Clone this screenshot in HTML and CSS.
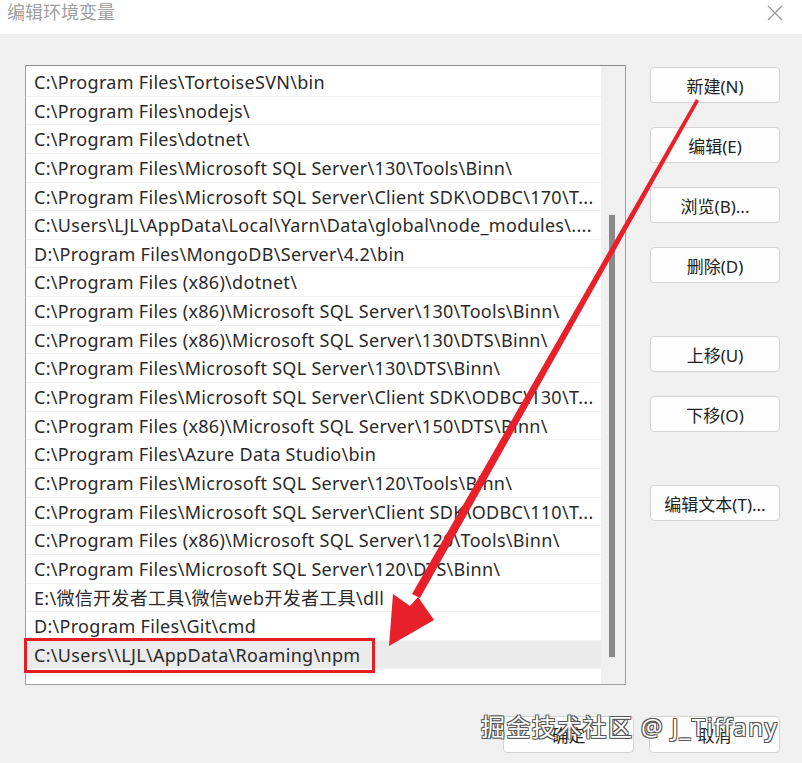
FILE: index.html
```html
<!DOCTYPE html>
<html lang="zh-CN">
<head>
    <meta charset="UTF-8">
    <title>编辑环境变量</title>
    <link rel="stylesheet" href="styles.css">
</head>
<body>
    <div class="window">
        <!-- Barra de título -->
        <div class="titlebar">
            <span class="title">编辑环境变量</span>
            <svg class="close" width="16" height="16" viewBox="0 0 16 16">
                <path d="M1 1 L15 15 M15 1 L1 15" stroke="#9a9a9a" stroke-width="1.3" fill="none"/>
            </svg>
        </div>

        <div class="content">
            <!-- Lista de caminhos -->
            <div class="listbox">
                <ul class="paths">
                    <li>C:\Program Files\TortoiseSVN\bin</li>
                    <li>C:\Program Files\nodejs\</li>
                    <li>C:\Program Files\dotnet\</li>
                    <li>C:\Program Files\Microsoft SQL Server\130\Tools\Binn\</li>
                    <li>C:\Program Files\Microsoft SQL Server\Client SDK\ODBC\170\T...</li>
                    <li>C:\Users\LJL\AppData\Local\Yarn\Data\global\node_modules\....</li>
                    <li>D:\Program Files\MongoDB\Server\4.2\bin</li>
                    <li>C:\Program Files (x86)\dotnet\</li>
                    <li>C:\Program Files (x86)\Microsoft SQL Server\130\Tools\Binn\</li>
                    <li>C:\Program Files (x86)\Microsoft SQL Server\130\DTS\Binn\</li>
                    <li>C:\Program Files\Microsoft SQL Server\130\DTS\Binn\</li>
                    <li>C:\Program Files\Microsoft SQL Server\Client SDK\ODBC\130\T...</li>
                    <li>C:\Program Files (x86)\Microsoft SQL Server\150\DTS\Binn\</li>
                    <li>C:\Program Files\Azure Data Studio\bin</li>
                    <li>C:\Program Files\Microsoft SQL Server\120\Tools\Binn\</li>
                    <li>C:\Program Files\Microsoft SQL Server\Client SDK\ODBC\110\T...</li>
                    <li>C:\Program Files (x86)\Microsoft SQL Server\120\Tools\Binn\</li>
                    <li>C:\Program Files\Microsoft SQL Server\120\DTS\Binn\</li>
                    <li>E:\微信开发者工具\微信web开发者工具\dll</li>
                    <li>D:\Program Files\Git\cmd</li>
                    <li class="selected">C:\Users\\LJL\AppData\Roaming\npm</li>
                </ul>
                <div class="scrollbar"><div class="thumb"></div></div>
            </div>

            <!-- Botões laterais -->
            <div class="side-buttons">
                <button class="btn">新建(N)</button>
                <button class="btn">编辑(E)</button>
                <button class="btn">浏览(B)...</button>
                <button class="btn">删除(D)</button>
                <button class="btn spaced">上移(U)</button>
                <button class="btn">下移(O)</button>
                <button class="btn spaced">编辑文本(T)...</button>
            </div>
        </div>

        <!-- Rodapé -->
        <div class="footer">
            <button class="btn">确定</button>
            <button class="btn">取消</button>
        </div>

        <!-- Anotações -->
        <div class="highlight"></div>
        <svg class="arrow" width="802" height="763" viewBox="0 0 802 763">
            <path d="M696 99 L699 101 L420 598 L412 594 Z" fill="#e8202a"/>
            <polygon points="389,646 393,594 410,606 418,597 434,620" fill="#e8202a"/>
        </svg>

        <div class="watermark">掘金技术社区 @ J_Tiffany</div>
    </div>
</body>
</html>
```

FILE: styles.css
```css
/* Estilo geral */
body {
    margin: 0;
    font-family: "Noto Sans", "Noto Sans CJK SC", sans-serif;
    background-color: #f0f0f0;
}

.window {
    position: relative;
    width: 802px;
    height: 763px;
    overflow: hidden;
    background-color: #f0f0f0;
}

/* Barra de título */
.titlebar {
    height: 34px;
    background-color: #ffffff;
    display: flex;
    align-items: center;
    justify-content: space-between;
    padding: 0 19px 0 7px;
}

.title {
    font-size: 18px;
    color: #a0a0a0;
    margin-top: -12px;
}

.close {
    margin-top: -8px;
}

/* Área principal */
.content {
    display: flex;
    gap: 24px;
    padding: 31px 22px 0 25px;
}

.listbox {
    width: 599px;
    height: 618px;
    border: 1px solid #a0a0a0;
    border-top-color: #8c8c8c;
    background-color: #ffffff;
    display: flex;
}

.paths {
    list-style: none;
    margin: 0;
    padding: 2px 0 0;
    flex: 1;
    min-width: 0;
}

.paths li {
    height: 28.65px;
    line-height: 28.65px;
    padding-left: 8px;
    font-size: 18px;
    letter-spacing: 0.3px;
    color: #2a2a2a;
    border-bottom: 1px solid #f0f0f0;
    box-sizing: border-box;
    white-space: nowrap;
    overflow: hidden;
}

.paths li.selected {
    background-color: #ebebeb;
}

.scrollbar {
    width: 24px;
    background-color: #f0f0f0;
    position: relative;
}

.thumb {
    position: absolute;
    left: 8px;
    top: 149px;
    width: 6px;
    height: 442px;
    background-color: #8a8a8a;
}

/* Botões */
.side-buttons {
    display: flex;
    flex-direction: column;
    gap: 24px;
    padding-top: 2px;
}

.btn {
    width: 130px;
    height: 36px;
    border: 1px solid #d4d4d4;
    border-radius: 4px;
    background-color: #fdfdfd;
    font-family: "Noto Sans", "Noto Sans CJK SC", sans-serif;
    font-size: 17px;
    color: #222222;
    padding: 0;
}

.side-buttons .spaced {
    margin-top: 29px;
}

.footer {
    display: flex;
    justify-content: flex-end;
    gap: 15px;
    padding: 31px 22px 0 0;
}

.footer .btn {
    width: 131px;
    height: 37px;
}

/* Sobreposições */
.highlight {
    position: absolute;
    left: 24px;
    top: 638px;
    width: 351px;
    height: 35px;
    border: 3px solid #e31e24;
    box-sizing: border-box;
}

.arrow {
    position: absolute;
    left: 0;
    top: 0;
}

.watermark {
    position: absolute;
    left: 481px;
    top: 708px;
    font-size: 24px;
    color: #ffffff;
    letter-spacing: 1.4px;
    text-shadow: -1px -1px 0 #555, 1px -1px 0 #555, -1px 1px 0 #555, 1px 1px 0 #555;
    white-space: nowrap;
}
```
